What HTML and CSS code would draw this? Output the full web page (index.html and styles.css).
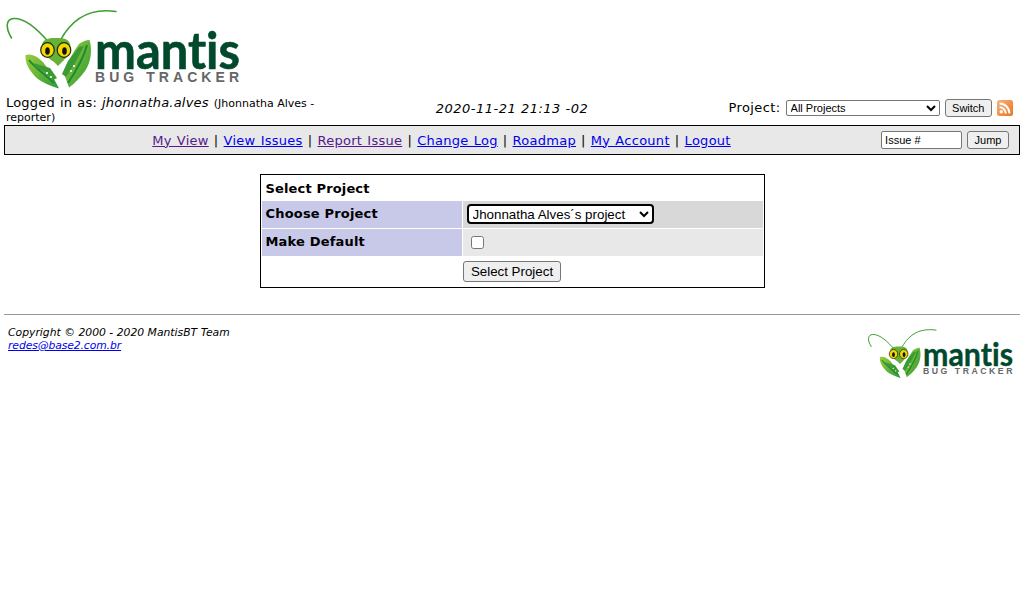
FILE: index.html
```html
<!DOCTYPE html>
<html lang="en">
<head>
<meta charset="utf-8">
<title>MantisBT</title>
<link rel="stylesheet" href="styles.css">
</head>
<body>
<svg class="defs" width="0" height="0" aria-hidden="true">
  <defs>
    <linearGradient id="leaf" x1="0" y1="0" x2="1" y2="1">
      <stop offset="0" stop-color="#9ccc3c"/>
      <stop offset="1" stop-color="#2c9a35"/>
    </linearGradient>
    <linearGradient id="rssg" x1="0" y1="0" x2="1" y2="1">
      <stop offset="0" stop-color="#f9b27a"/>
      <stop offset="1" stop-color="#e8751f"/>
    </linearGradient>
    <symbol id="mantis-logo" viewBox="4 0 240 95">
      <path class="ant" d="M11.500 38C5 27 6 19 14 18.500C26 18 39 31 48 41.500"/>
      <path class="ant" d="M60 41C70 22 86 7 116 11.500"/>
      <path class="blade" d="M25.500 55C31 53 37 56 43 62L51 73L59 88.500C48 85 38 81 33 74C28 68 25 62 25.500 55Z"/>
      <path class="blade" d="M89.500 40C92.500 50 91 62 85 71C80 78 74 84 69 87.500L63.500 72C68 62 73 52 79 44C83 41.500 86 40 89.500 40Z"/>
      <path class="vein" d="M29 60C34 67 42 72 54 83"/>
      <path class="vein" d="M87 45C84 57 78 68 68 83"/>
      <path class="arm" d="M33 63L50 68L57 78L53 80L45 72L35 67Z"/>
      <path class="arm" d="M84 46L75 63L66 77L62 74L68 61L79 47Z"/>
      <path class="body" d="M42 44C44 38 52 38 56 38C62 38 68 38 70 44C72 52 66 58 62 62L58 66L54 62C48 58 40 52 42 44Z"/>
      <ellipse class="eye" cx="47.500" cy="50" rx="6.800" ry="7.300"/>
      <ellipse class="eye" cx="64" cy="50" rx="6.800" ry="7.300"/>
      <ellipse class="pupil" cx="47.500" cy="51" rx="2.300" ry="3.800"/>
      <ellipse class="pupil" cx="64.500" cy="51" rx="2.300" ry="3.800"/>
      <circle class="dot" cx="47" cy="73" r="1.100"/>
      <circle class="dot" cx="51" cy="77" r="1.100"/>
      <circle class="dot" cx="74" cy="66" r="1.100"/>
      <circle class="dot" cx="71" cy="71" r="1.100"/>
      <text class="word" x="95" y="69" textLength="145" lengthAdjust="spacingAndGlyphs">mantis</text>
      <text class="tag" x="95" y="82" textLength="144">BUG TRACKER</text>
    </symbol>
  </defs>
</svg>

<header class="masthead">
  <svg class="logo-large" viewBox="4 0 240 95" role="img" aria-label="Mantis Bug Tracker"><use href="#mantis-logo" x="4"/></svg>
</header>

<div class="infobar">
  <div class="login">Logged in as: <em>jhonnatha.alves</em> <small>(Jhonnatha Alves - reporter)</small></div>
  <div class="clock"><em>2020-11-21 21:13 -02</em></div>
  <form class="switcher">
    <label class="proj-label" for="project">Project:</label>
    <select id="project" class="sel-small"><option>All Projects</option></select>
    <button type="button" class="btn">Switch</button>
    <svg class="rss" viewBox="0 0 16 16" aria-label="RSS">
      <rect width="16" height="16" rx="2.500" fill="url(#rssg)"/>
      <circle cx="4.300" cy="11.700" r="1.700" fill="#fff"/>
      <path d="M2.600 7.300a6.100 6.100 0 0 1 6.100 6.100M2.600 3.600a9.800 9.800 0 0 1 9.800 9.800" fill="none" stroke="#fff" stroke-width="2"/>
    </svg>
  </form>
</div>

<nav class="menu">
  <div class="links">
    <a class="seen" href="#">My View</a> | <a href="#">View Issues</a> | <a class="seen" href="#">Report Issue</a> | <a href="#">Change Log</a> | <a href="#">Roadmap</a> | <a href="#">My Account</a> | <a href="#">Logout</a>
  </div>
  <form class="jump">
    <input class="issue" type="text" value="Issue #">
    <button type="button" class="btn">Jump</button>
  </form>
</nav>

<form class="panel">
  <div class="panel-title">Select Project</div>
  <div class="row row-dark">
    <div class="label">Choose Project</div>
    <div class="value"><select class="sel-project"><option>Jhonnatha Alves´s project</option></select></div>
  </div>
  <div class="row row-light">
    <div class="label">Make Default</div>
    <div class="value"><input class="check" type="checkbox"></div>
  </div>
  <div class="actions"><button type="button" class="btn btn-big">Select Project</button></div>
</form>

<hr class="rule">

<footer class="foot">
  <address class="credit">Copyright © 2000 - 2020 MantisBT Team<br><a class="mail" href="#">redes@base2.com.br</a></address>
  <svg class="logo-small" viewBox="4 0 240 95" role="img" aria-label="Mantis Bug Tracker"><use href="#mantis-logo" x="4"/></svg>
</footer>
</body>
</html>
```
FILE: styles.css
```css
html, body { background: #fff; }
body {
  margin: 0;
  padding: 0 4px;
  font-family: "DejaVu Sans", Verdana, sans-serif;
  font-size: 13px;
  color: #000;
}
a { color: #0000ee; }
a.seen { color: #551a8b; }
.defs { position: absolute; }

.masthead { height: 95px; }
.logo-large { display: block; width: 240px; height: 95px; }

.ant { fill: none; stroke: #3f9e34; stroke-width: 1.600; stroke-linecap: round; }
.blade { fill: url(#leaf); }
.vein { fill: none; stroke: #1f8a33; stroke-width: 2; }
.arm { fill: #3a9a34; }
.body { fill: #66b136; }
.eye { fill: #f6d500; stroke: #14320f; stroke-width: 1.200; }
.pupil { fill: #111; }
.dot { fill: #fff; }
.word {
  font-family: Lato, "Open Sans", sans-serif;
  font-weight: 700;
  font-size: 51px;
  font-variant-ligatures: none;
  fill: #00492c;
  stroke: #00492c;
  stroke-width: .6px;
}
.tag { font-family: "Liberation Sans", sans-serif; font-weight: 700; font-size: 14px; fill: #666; }

.infobar {
  display: grid;
  grid-template-columns: 339px 1fr 339px;
  align-items: center;
  height: 30px;
}
.login { padding-left: 2px; line-height: 13px; letter-spacing: .2px; word-spacing: .7px; }
.login small { font-size: 11px; letter-spacing: 0; word-spacing: 0; }
.clock { text-align: center; letter-spacing: .5px; margin-top: -3px; }
.proj-label { letter-spacing: .4px; }
.switcher {
  display: flex;
  align-items: center;
  justify-content: flex-end;
  gap: 5px;
  padding-right: 7px;
  margin-top: -5px;
}
.sel-small {
  width: 154px;
  height: 16px;
  padding: 0;
  font: 11px "Liberation Sans", sans-serif;
  background: #fff;
  border: 1px solid #767676;
  border-radius: 2px;
}
.btn {
  height: 18px;
  padding: 0 6.500px;
  font: 11px "Liberation Sans", sans-serif;
  color: #000;
  background: #efefef;
  border: 1px solid #767676;
  border-radius: 3px;
}
.rss { display: block; width: 16px; height: 16px; }

.menu {
  display: flex;
  align-items: center;
  height: 30px;
  box-sizing: border-box;
  background: #e8e8e8;
  border: 1px solid #000;
  padding-right: 10px;
}
.links { width: 873px; text-align: center; letter-spacing: .27px; word-spacing: .7px; }
.jump { display: flex; align-items: center; gap: 5px; margin-left: auto; }
.issue {
  box-sizing: border-box;
  width: 81px;
  height: 18px;
  padding: 0 3px;
  font: 11px "Liberation Sans", sans-serif;
  border: 1px solid #767676;
  border-radius: 2px;
  background: #fff;
}

.panel {
  box-sizing: border-box;
  width: 505px;
  margin: 19px auto 0;
  padding: 1px;
  border: 1px solid #000;
  display: flex;
  flex-direction: column;
  gap: 1px;
}
.panel-title { height: 24px; line-height: 26px; padding-left: 4px; font-weight: 700; letter-spacing: .15px; }
.row { display: grid; grid-template-columns: 200px 1fr; gap: 1px; height: 27px; }
.row-dark .value { background: #d8d8d8; }
.row-light .value { background: #e8e8e8; }
.label { background: #c8c8e8; font-weight: 700; padding: 5px 0 0 4px; letter-spacing: .18px; }
.value { display: flex; align-items: center; padding-left: 4px; }
.sel-project {
  width: 187px;
  height: 20px;
  margin-top: -1px;
  padding: 0;
  font: 13.333px "Liberation Sans", sans-serif;
  background: #fff;
  border: 2px solid #000;
  border-radius: 4px;
}
.check { width: 13px; height: 13px; margin: 0 0 0 4px; }
.actions { display: flex; justify-content: center; align-items: center; height: 29px; }
.btn-big { height: 21px; padding: 0 7px; font-size: 13.333px; }

.rule { margin: 26px 0 0; border: 0; border-top: 1px solid #999; height: 0; }

.foot { display: flex; justify-content: space-between; align-items: flex-start; padding: 11px 4px 0 4px; }
.credit { font-size: 10.800px; line-height: 13px; }
.mail { letter-spacing: -.1px; }
.logo-small { display: block; width: 150px; height: 59px; margin-top: -3px; }
```
